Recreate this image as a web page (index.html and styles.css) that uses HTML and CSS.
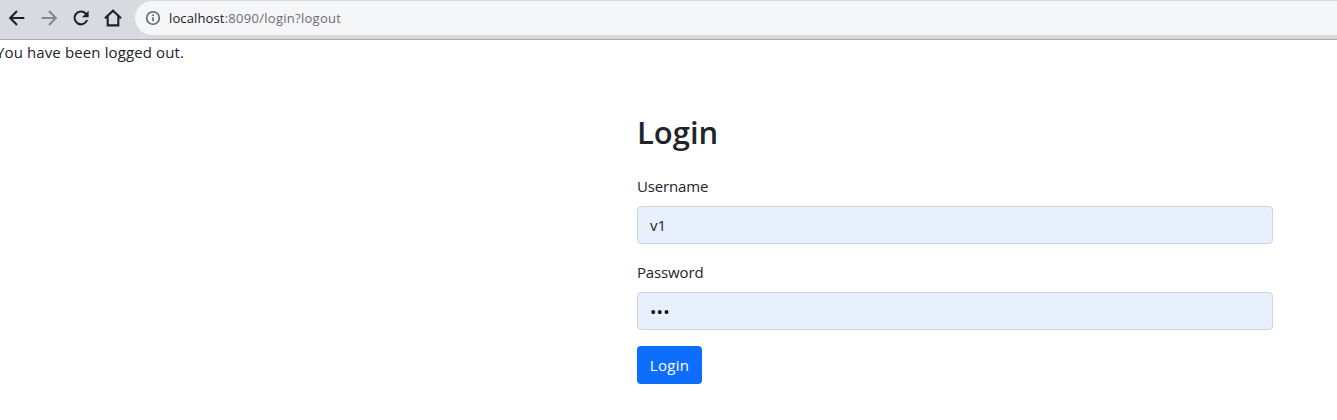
FILE: index.html
```html
<!DOCTYPE html>
<html lang="en">
<head>
<meta charset="utf-8">
<title>Login</title>
<link rel="stylesheet" href="styles.css">
</head>
<body>
<header class="toolbar">
  <nav class="nav">
    <svg class="icon" viewBox="0 0 24 24"><path d="M20 12H5M12 4.4 4.6 12l7.4 7.6"/></svg>
    <svg class="icon icon-off" viewBox="0 0 24 24"><path d="M4 12h15M12 4.4l7.4 7.6-7.4 7.6"/></svg>
    <svg class="icon" viewBox="0 0 24 24"><path d="M18.6 14.2A7 7 0 1 1 17.2 7.2L19 9"/><path class="solid" d="M20.3 4v7.2H13z"/></svg>
    <svg class="icon" viewBox="0 0 24 24"><path d="M3.2 12.3 12 4l8.8 8.3M6.2 10v10h11.6V10"/></svg>
  </nav>
  <div class="address">
    <svg class="info" viewBox="0 0 16 16"><circle cx="8" cy="8" r="6.3"/><path d="M8 7.2v4M8 4.3v1.6"/></svg>
    <span class="url"><span class="host">localhost</span>:8090/login?logout</span>
  </div>
</header>
<main class="page">
  <p class="notice">You have been logged out.</p>
  <form class="login">
    <h2 class="title">Login</h2>
    <label class="label" for="username">Username</label>
    <input class="field" id="username" type="text" value="v1">
    <label class="label" for="password">Password</label>
    <input class="field secret" id="password" type="text" value="•••">
    <button class="submit" type="button">Login</button>
  </form>
</main>
</body>
</html>
```
FILE: styles.css
```css
* { box-sizing: border-box; }
body {
  margin: 0;
  height: 420px;
  overflow: hidden;
  background: #fff;
  color: #212529;
  font: 15px/24px "Segoe UI", "Open Sans", sans-serif;
}
.toolbar {
  display: flex;
  height: 40px;
  background: #d9dae0;
  border-bottom: 1px solid #aaabae;
  padding: 1px 0 4px 6px;
}
.nav {
  display: flex;
  align-items: center;
  gap: 10px;
  width: 129px;
}
.icon {
  width: 22px;
  height: 22px;
  flex: none;
  fill: none;
  stroke: #202124;
  stroke-width: 2.3;
}
.icon-off { stroke: #86878b; }
.solid { fill: #202124; stroke: none; }
.address {
  display: flex;
  flex: 1;
  align-items: center;
  gap: 8px;
  padding-left: 10px;
  background: #f5f6f8;
  border-radius: 17px 0 0 17px;
}
.info {
  width: 16px;
  height: 16px;
  fill: none;
  stroke: #5f6368;
  stroke-width: 1.6;
}
.url {
  color: #6b6d70;
  font-size: 13px;
  letter-spacing: 0.28px;
}
.host {
  color: #202124;
  letter-spacing: 0.13px;
}
.notice {
  margin: 0 0 0 -4px;
  letter-spacing: 0.12px;
}
.login {
  display: flex;
  flex-direction: column;
  align-items: flex-start;
  width: 636px;
  margin: 50px 0 0 637px;
}
.title {
  margin: 0 0 23px;
  font-size: 31px;
  line-height: 37px;
  font-weight: 600;
}
.label {
  margin-bottom: 8px;
  letter-spacing: -0.15px;
}
.field {
  width: 100%;
  height: 38px;
  margin: 0 0 16px;
  padding: 6px 12px;
  border: 1px solid #ced4da;
  border-radius: 4px;
  background: #e8f0fe;
  color: #212529;
  font: inherit;
}
.secret {
  color: #000;
  font-size: 17px;
  letter-spacing: 0.2px;
}
.submit {
  width: 65px;
  height: 38px;
  padding: 0;
  border: 0;
  border-radius: 4px;
  background: #0d6efd;
  color: #fff;
  font: inherit;
  letter-spacing: 0.3px;
}
```
